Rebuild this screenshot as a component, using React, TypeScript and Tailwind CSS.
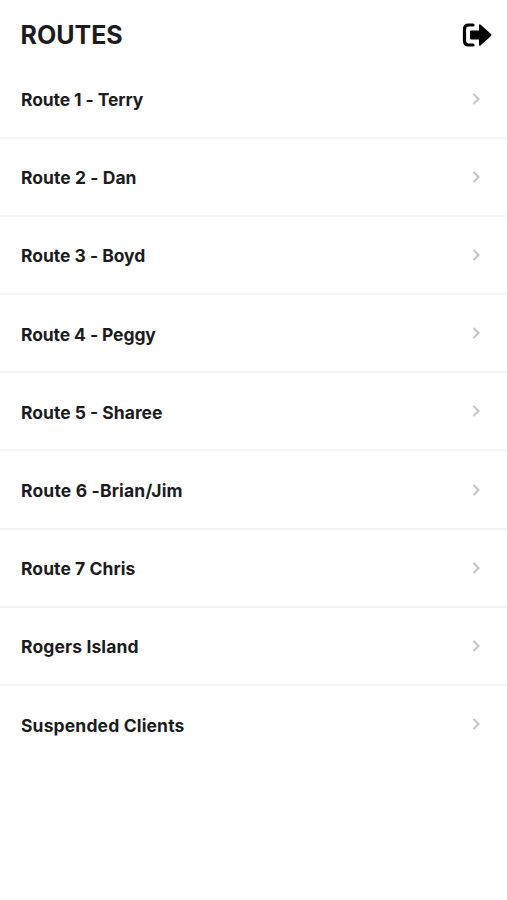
import React from "react";

interface RouteItemProps {
  name: string;
  tracking: string;
}

const routes: RouteItemProps[] = [
  { name: "Route 1 - Terry", tracking: "tracking-[-0.1px]" },
  { name: "Route 2 - Dan", tracking: "tracking-[0.05px]" },
  { name: "Route 3 - Boyd", tracking: "tracking-[-0.03px]" },
  { name: "Route 4 - Peggy", tracking: "tracking-[-0.1px]" },
  { name: "Route 5 - Sharee", tracking: "tracking-[0px]" },
  { name: "Route 6 -Brian/Jim", tracking: "tracking-[0.17px]" },
  { name: "Route 7 Chris", tracking: "tracking-[0.06px]" },
  { name: "Rogers Island", tracking: "tracking-[0.12px]" },
  { name: "Suspended Clients", tracking: "tracking-[0.15px]" },
];

const LogoutIcon = () => (
  <svg width="30" height="24" viewBox="0 0 30 24" fill="none">
    <path
      d="M11 2H6.500Q2.500 2 2.500 6V18Q2.500 22 6.500 22H11"
      stroke="#000"
      strokeWidth="3.200"
      strokeLinecap="round"
    />
    <path
      d="M9 7.500H17V2.500Q17 0.500 18.700 1.800L29 11Q30 12 29 13L18.700 22.200Q17 23.500 17 21.500V16.500H9Q8 16.500 8 15.500V8.500Q8 7.500 9 7.500Z"
      fill="#000"
    />
  </svg>
);

const RouteItem = ({ name, tracking }: RouteItemProps) => (
  <li className="flex h-[78.2px] items-center justify-between border-b-2 border-[#f4f4f4] pl-[21px] pr-[26px] last:border-transparent">
    <span className={`pt-[3px] text-[17.5px] leading-6 font-bold ${tracking}`}>
      {name}
    </span>
    <svg width="9" height="12" viewBox="0 0 9 12" fill="none">
      <path d="M1.500 1L6.500 6L1.500 11" stroke="#c4c4c4" strokeWidth="2" />
    </svg>
  </li>
);

const App = () => {
  return (
    <main className="min-h-screen bg-white font-['Inter',sans-serif] text-[#1c1c1e]">
      <header className="flex h-[60.5px] items-center justify-between pl-[20.5px] pr-[15px] pt-[10px]">
        <h1 className="pt-px text-[25px] font-bold">ROUTES</h1>
        <LogoutIcon />
      </header>
      <ul>
        {routes.map((route) => (
          <RouteItem key={route.name} {...route} />
        ))}
      </ul>
    </main>
  );
};

export default App;
